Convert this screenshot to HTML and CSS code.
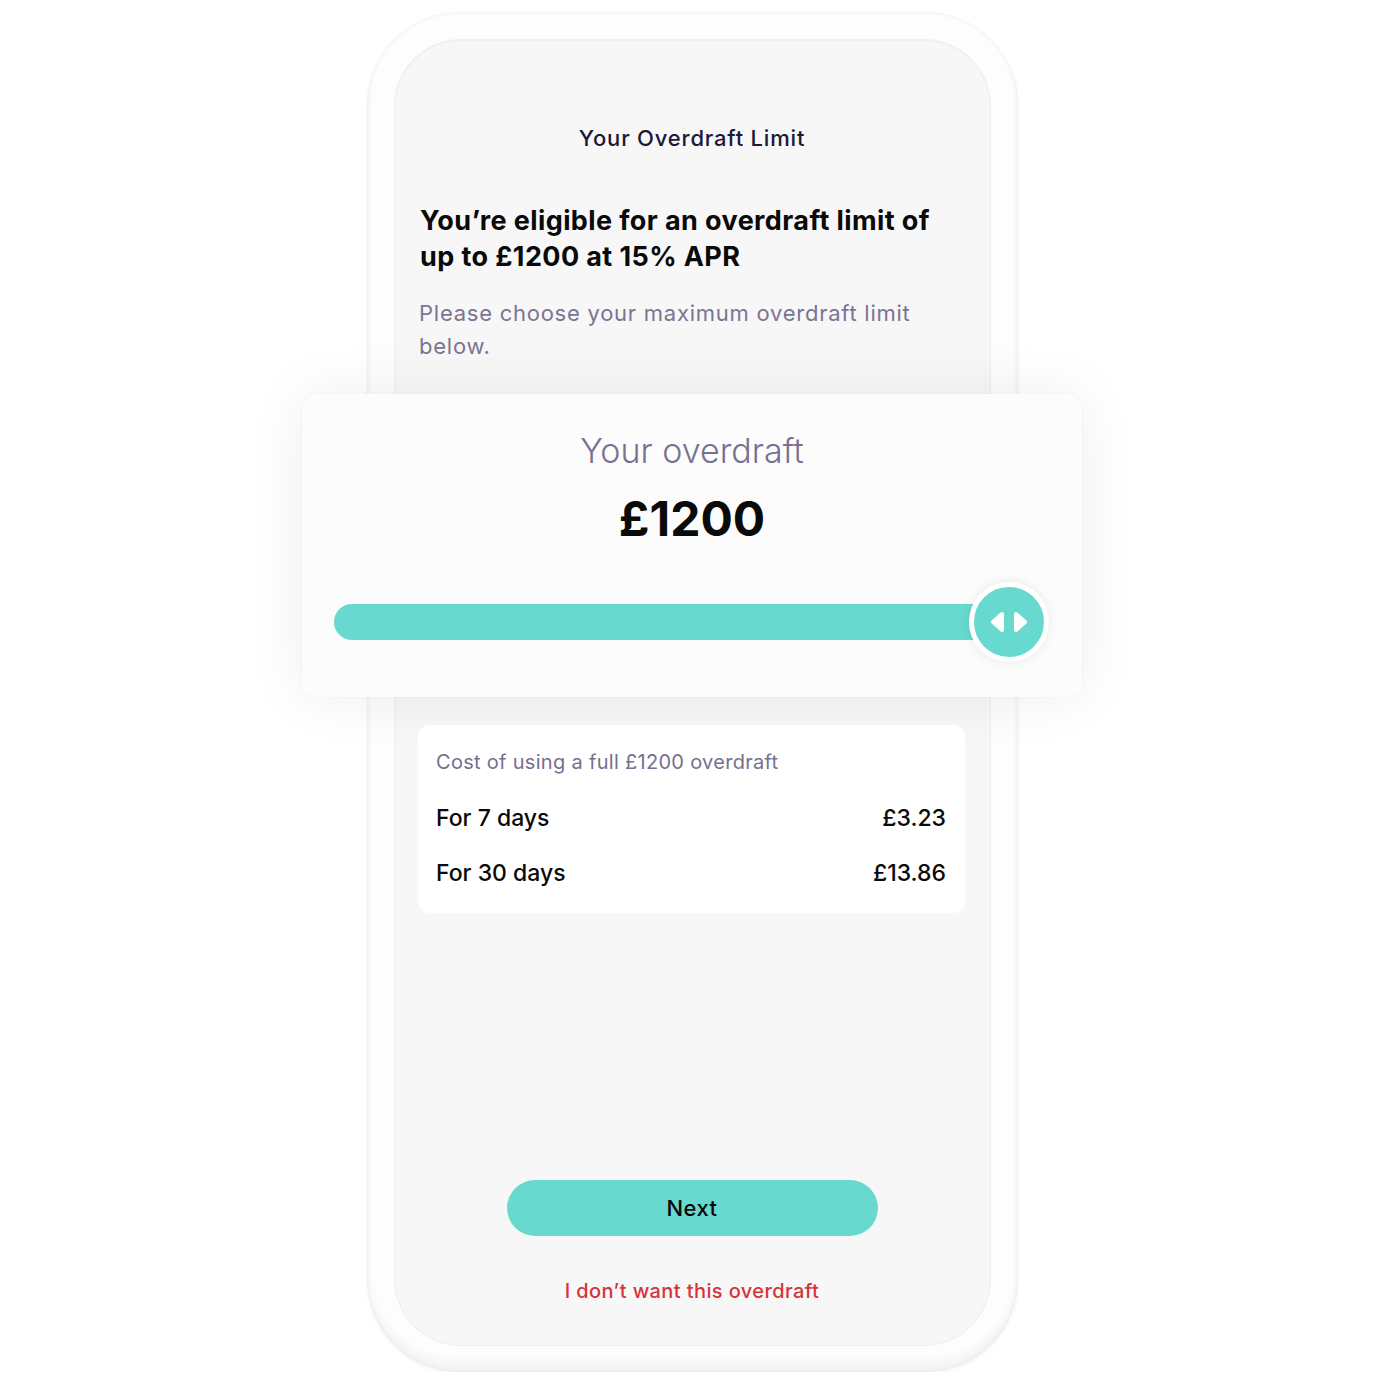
FILE: index.html
```html
<!DOCTYPE html>
<html lang="en">
<head>
  <meta charset="UTF-8">
  <meta name="viewport" content="width=device-width, initial-scale=1.0">
  <title>Your Overdraft Limit</title>
  <link rel="stylesheet" href="styles.css">
</head>
<body>
  <div class="phone">
    <div class="screen">
      <h2 class="screen-title">Your Overdraft Limit</h2>

      <h1 class="headline">You’re eligible for an overdraft limit of up to £1200 at 15% APR</h1>
      <p class="intro">Please choose your maximum overdraft limit below.</p>

      <!-- tarjeta que sobresale del telefono -->
      <div class="limit-card">
        <div class="limit-label">Your overdraft</div>
        <div class="limit-amount">£1200</div>
        <div class="slider">
          <div class="slider-track"></div>
          <div class="slider-knob">
            <svg width="38" height="22" viewBox="0 0 38 22">
              <path d="M12 3 L3 11 L12 19 Z" fill="#fff" stroke="#fff" stroke-width="4" stroke-linejoin="round"/>
              <path d="M26 3 L35 11 L26 19 Z" fill="#fff" stroke="#fff" stroke-width="4" stroke-linejoin="round"/>
            </svg>
          </div>
        </div>
      </div>

      <div class="cost-box">
        <div class="cost-title">Cost of using a full £1200 overdraft</div>
        <div class="cost-row">
          <span>For 7 days</span>
          <span>£3.23</span>
        </div>
        <div class="cost-row">
          <span>For 30 days</span>
          <span>£13.86</span>
        </div>
      </div>

      <button class="next-btn">Next</button>
      <a class="decline-link" href="#">I don’t want this overdraft</a>
    </div>
  </div>
</body>
</html>
```

FILE: styles.css
```css
body {
  margin: 0;
  padding-left: 3px;
  background-color: #ffffff;
  font-family: Inter, "Noto Sans", sans-serif;
  color: #0a0a0a;
}

.phone {
  width: 651px;
  height: 1360px;
  margin: 12px auto 0;
  padding: 28px 28px 27px;
  box-sizing: border-box;
  border-radius: 92px;
  background-color: #fdfdfd;
  box-shadow: inset 0 -10px 10px rgba(0, 0, 0, 0.04), inset 0 0 4px rgba(0, 0, 0, 0.07), 0 2px 4px rgba(0, 0, 0, 0.04);
}

.screen {
  height: 100%;
  box-sizing: border-box;
  border-radius: 66px;
  background-color: #f7f7f7;
  box-shadow: 0 0 0 1px #efefef, inset 0 1px 2px rgba(0, 0, 0, 0.04);
  padding: 84px 25px 41px 24px;
  display: flex;
  flex-direction: column;
}

.screen-title {
  margin: 0;
  font-size: 22px;
  line-height: 28px;
  font-weight: 500;
  letter-spacing: 0.8px;
  text-align: center;
  color: #1b1838;
}

.headline {
  margin: 51px 0 0 1px;
  max-width: 530px;
  font-size: 27px;
  line-height: 36px;
  font-weight: 700;
  letter-spacing: 0.4px;
  color: #0a0a0a;
}

.intro {
  margin: 22px 0 0 0;
  max-width: 510px;
  font-size: 22px;
  line-height: 33px;
  font-weight: 400;
  letter-spacing: 0.75px;
  color: #7b7493;
}

.limit-card {
  margin: 31px -117px 0 -117px;
  height: 303px;
  box-sizing: border-box;
  padding-top: 36px;
  border-radius: 14px;
  background-color: #fcfcfc;
  box-shadow: 0 0 60px rgba(0, 0, 0, 0.07), 0 0 3px rgba(0, 0, 0, 0.04);
  text-align: center;
}

.limit-label {
  font-size: 34px;
  line-height: 42px;
  font-weight: 300;
  color: #777090;
}

.limit-amount {
  margin-top: 19px;
  font-size: 48px;
  line-height: 56px;
  font-weight: 700;
  color: #0a0a0a;
}

.slider {
  margin: 35px 33px 0 32px;
  display: flex;
  align-items: center;
}

.slider-track {
  flex: 1;
  height: 36px;
  margin-right: -40px;
  border-radius: 18px;
  background-color: #68d9ce;
}

.slider-knob {
  width: 70px;
  height: 70px;
  border-radius: 50%;
  border: 5px solid #ffffff;
  background-color: #68d9ce;
  box-shadow: 0 0 12px rgba(0, 0, 0, 0.08);
  display: flex;
  align-items: center;
  justify-content: center;
  position: relative;
}

.cost-box {
  margin: 28px 0 0 -1px;
  padding: 24px 19px 25px 18px;
  border-radius: 12px;
  background-color: #ffffff;
}

.cost-title {
  font-size: 20px;
  line-height: 26px;
  letter-spacing: 0.3px;
  color: #75708f;
}

.cost-row {
  display: flex;
  justify-content: space-between;
  font-size: 23px;
  line-height: 30px;
  font-weight: 500;
  margin-top: 25px;
}

.cost-title + .cost-row {
  margin-top: 28px;
}

.next-btn {
  margin: auto auto 0 auto;
  width: 371px;
  height: 56px;
  border: none;
  border-radius: 28px;
  background-color: #68d9ce;
  font-family: inherit;
  font-size: 22px;
  font-weight: 500;
  letter-spacing: 0.4px;
  color: #0a0a0a;
  cursor: pointer;
}

.decline-link {
  margin-top: 42px;
  font-size: 20px;
  line-height: 26px;
  font-weight: 500;
  letter-spacing: 0.4px;
  text-align: center;
  color: #d7343a;
  text-decoration: none;
}
```
